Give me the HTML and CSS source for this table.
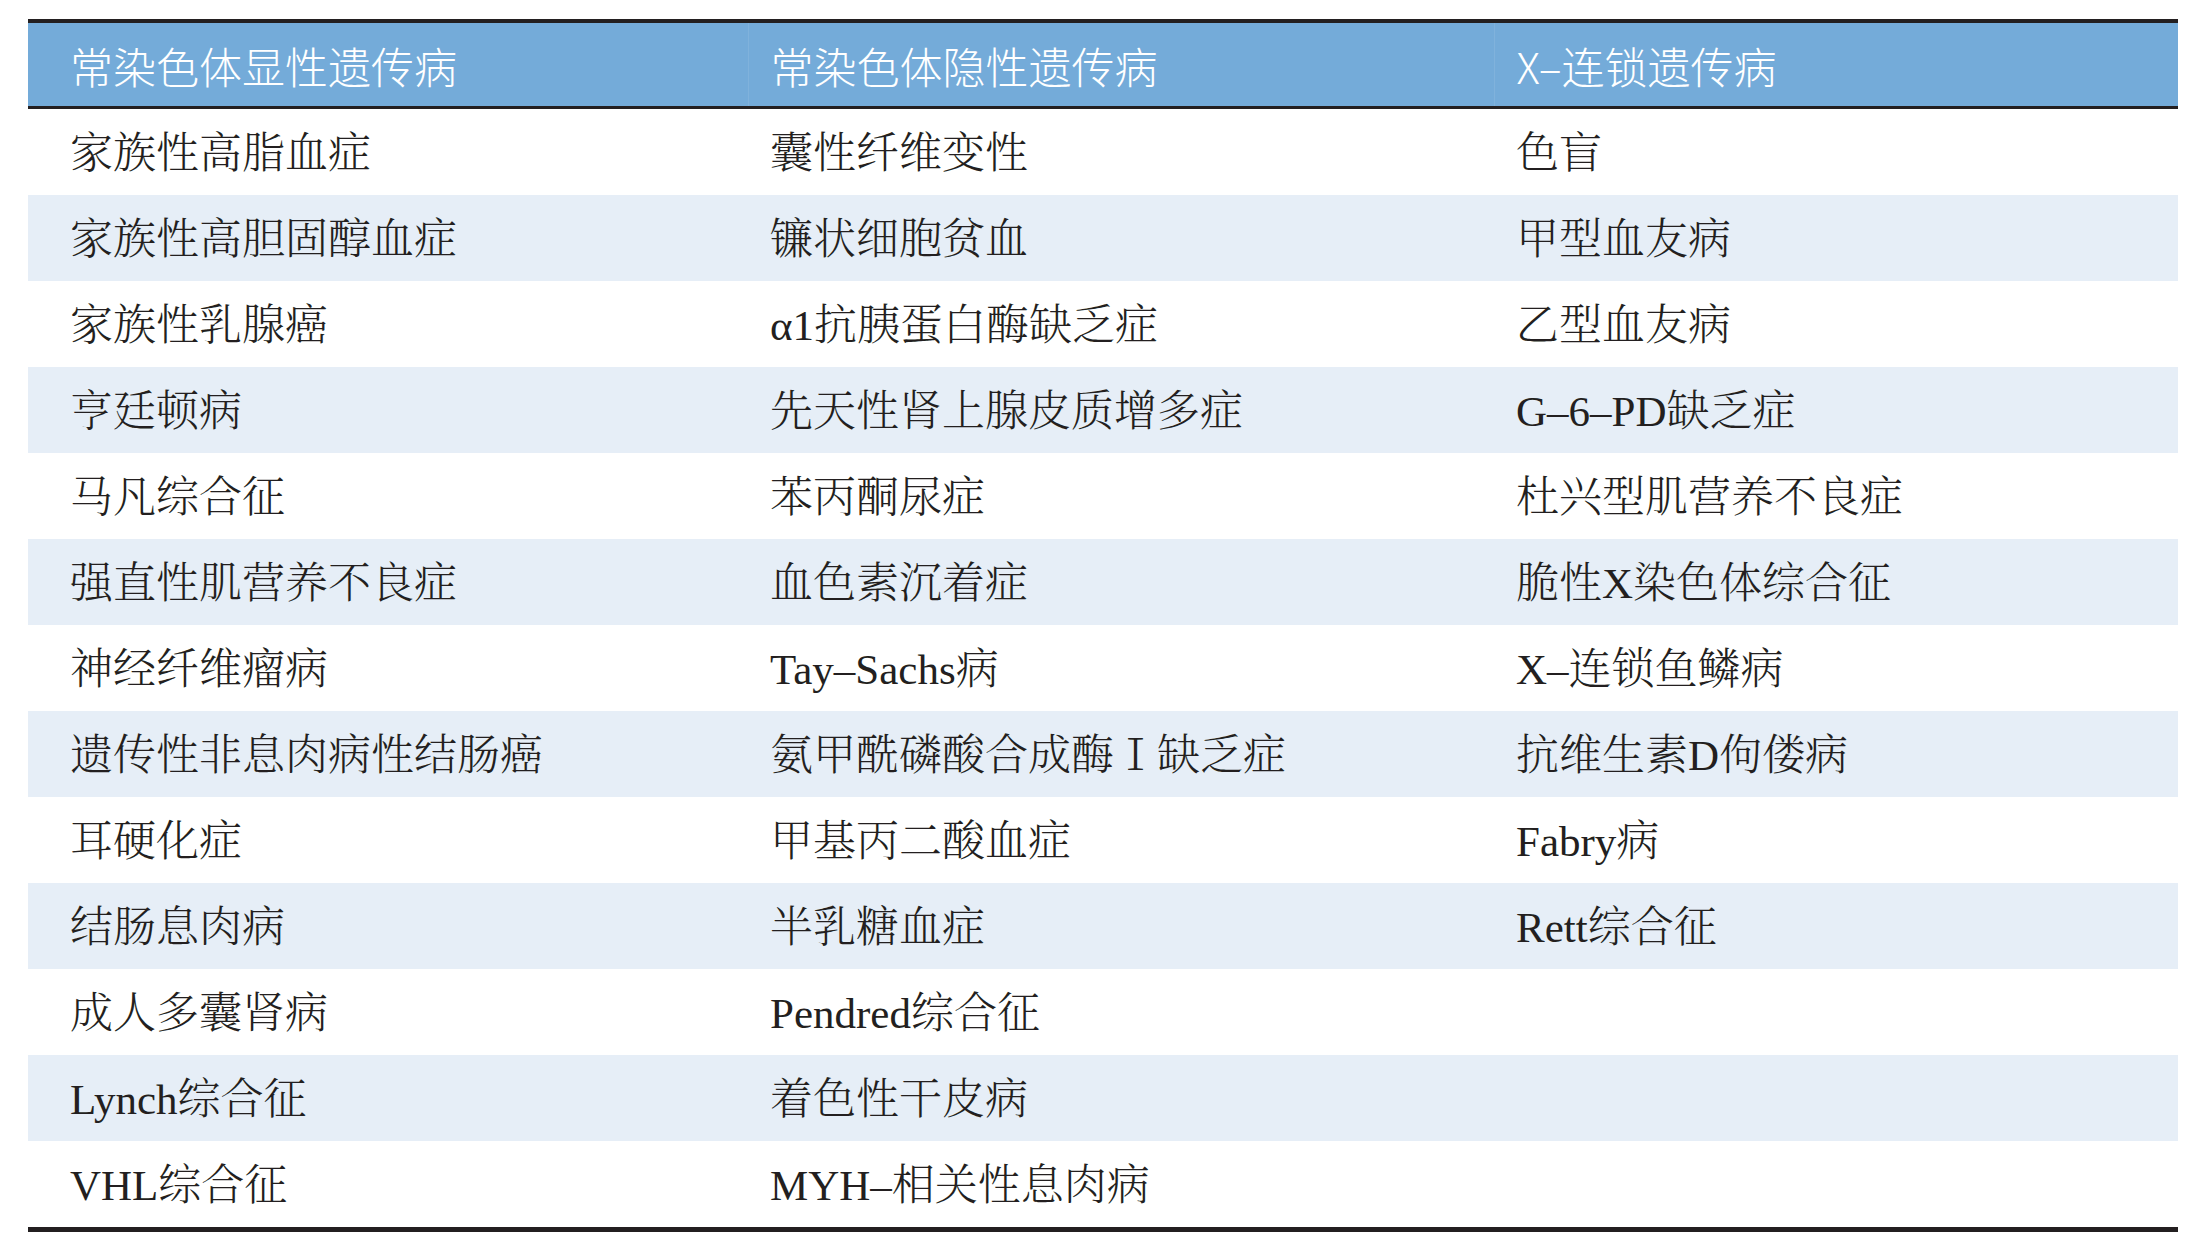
FILE: index.html
```html
<!DOCTYPE html>
<html lang="zh-CN">
<head>
<meta charset="utf-8">
<title>遗传病分类</title>
<link rel="stylesheet" href="styles.css">
</head>
<body>
<div class="page">
<table class="gene-table">
  <colgroup>
    <col class="c1"><col class="c2"><col class="c3">
  </colgroup>
  <thead>
    <tr>
      <th>常染色体显性遗传病</th>
      <th>常染色体隐性遗传病</th>
      <th>X–连锁遗传病</th>
    </tr>
  </thead>
  <tbody>
    <tr><td>家族性高脂血症</td><td>囊性纤维变性</td><td>色盲</td></tr>
    <tr><td>家族性高胆固醇血症</td><td>镰状细胞贫血</td><td>甲型血友病</td></tr>
    <tr><td>家族性乳腺癌</td><td>α1抗胰蛋白酶缺乏症</td><td>乙型血友病</td></tr>
    <tr><td>亨廷顿病</td><td>先天性肾上腺皮质增多症</td><td>G–6–PD缺乏症</td></tr>
    <tr><td>马凡综合征</td><td>苯丙酮尿症</td><td>杜兴型肌营养不良症</td></tr>
    <tr><td>强直性肌营养不良症</td><td>血色素沉着症</td><td>脆性X染色体综合征</td></tr>
    <tr><td>神经纤维瘤病</td><td>Tay–Sachs病</td><td>X–连锁鱼鳞病</td></tr>
    <tr><td>遗传性非息肉病性结肠癌</td><td>氨甲酰磷酸合成酶Ⅰ缺乏症</td><td>抗维生素D佝偻病</td></tr>
    <tr><td>耳硬化症</td><td>甲基丙二酸血症</td><td>Fabry病</td></tr>
    <tr><td>结肠息肉病</td><td>半乳糖血症</td><td>Rett综合征</td></tr>
    <tr><td>成人多囊肾病</td><td>Pendred综合征</td><td></td></tr>
    <tr><td>Lynch综合征</td><td>着色性干皮病</td><td></td></tr>
    <tr><td>VHL综合征</td><td>MYH–相关性息肉病</td><td></td></tr>
  </tbody>
</table>
</div>
</body>
</html>
```

FILE: styles.css
```css
html, body {
  margin: 0;
  padding: 0;
  background: #ffffff;
}

.page {
  padding: 19px 22px 0 28px;
}

.gene-table {
  width: 2150px;
  border-collapse: collapse;
  table-layout: fixed;
  border-top: 4px solid #231f20;
  border-bottom: 5px solid #231f20;
}

.c1 { width: 720px; }
.c2 { width: 746px; }
.c3 { width: 684px; }

.gene-table th {
  height: 81px;
  padding: 2px 0 0 22px;
  background: #74abd9;
  color: #ffffff;
  text-align: left;
  font-family: "Noto Sans CJK SC", "Noto Sans", sans-serif;
  font-weight: 300;
  font-size: 43px;
  line-height: 1;
  border-bottom: 3px solid #231f20;
  vertical-align: middle;
}

.gene-table th + th {
  border-left: 1px solid #80b2dc;
}

.gene-table td {
  height: 83px;
  padding: 3px 0 0 22px;
  color: #231f20;
  font-family: "Liberation Serif", "Noto Serif CJK SC", "AR PL UMing CN", "Noto Sans CJK SC", serif;
  font-weight: 300;
  font-size: 43px;
  line-height: 1;
  vertical-align: middle;
  white-space: nowrap;
}

.gene-table th:first-child,
.gene-table td:first-child {
  padding-left: 42px;
}

.gene-table tbody tr:nth-child(even) td {
  background: #e6eef7;
}
```
